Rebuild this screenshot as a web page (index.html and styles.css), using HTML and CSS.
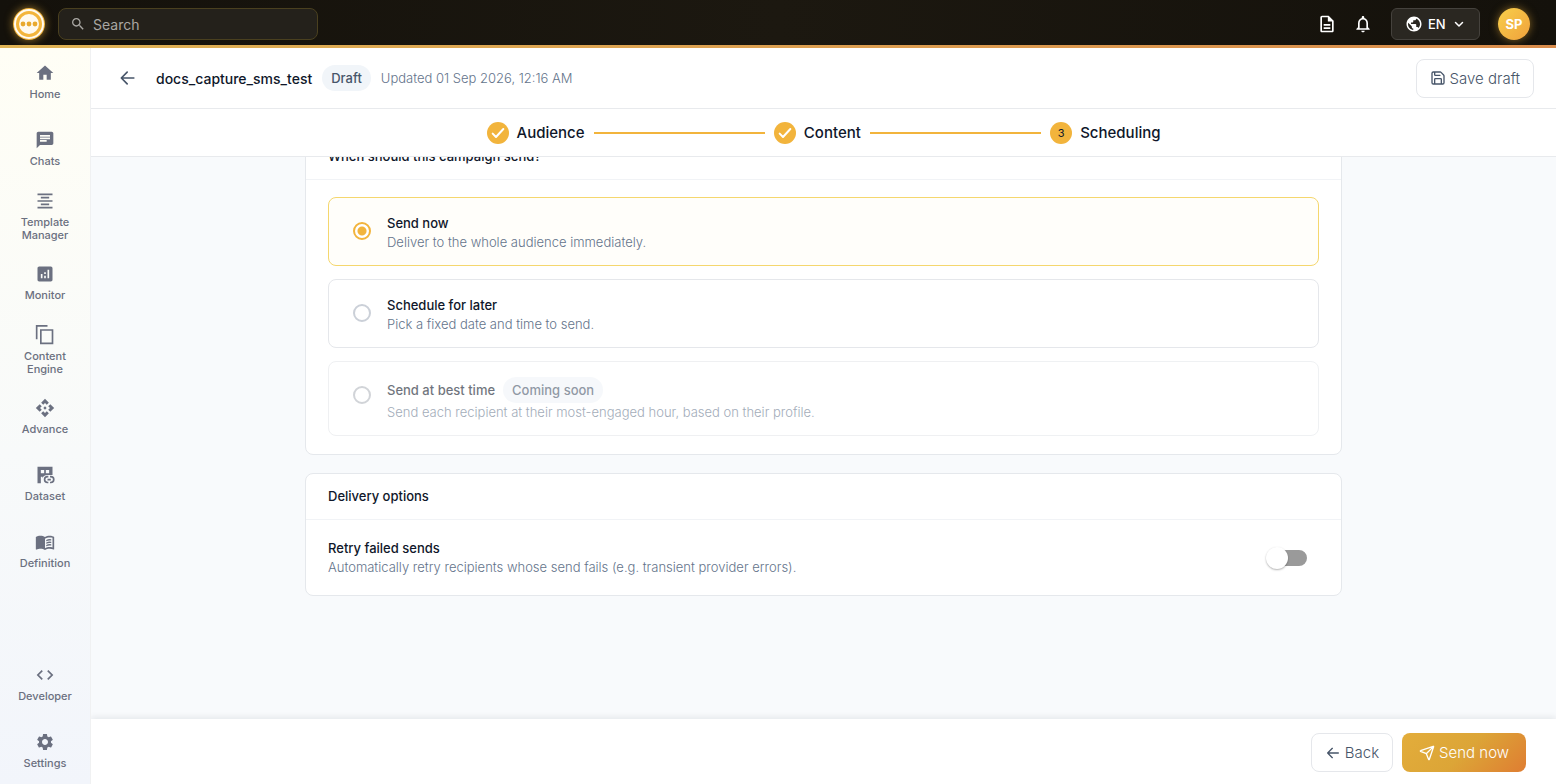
FILE: index.html
```html
<!DOCTYPE html>
<html lang="en">
<head>
  <meta charset="UTF-8" />
  <meta name="viewport" content="width=device-width, initial-scale=1" />
  <title>docs_capture_sms_test</title>
  <link rel="stylesheet" href="styles.css">
</head>
<body>

  <header class="topbar">
    <a class="logo" href="#" aria-label="Dashboard">
      <svg viewBox="0 0 32 32" width="32" height="32">
        <circle cx="16" cy="16" r="16" fill="#f3b53c" />
        <circle cx="16" cy="16" r="14" fill="none" stroke="#fffaf0" stroke-width="2" />
        <circle cx="16" cy="16" r="10" fill="#fffaf0" />
        <circle cx="10" cy="16" r="2.4" fill="#e9a92e" />
        <circle cx="16" cy="16" r="2.4" fill="#e9a92e" />
        <circle cx="22" cy="16" r="2.4" fill="#e9a92e" />
      </svg>
    </a>
    <label class="search">
      <svg class="icon" viewBox="0 0 24 24" width="16" height="16"><path d="M15.5 14h-.79l-.28-.27C15.41 12.59 16 11.11 16 9.5 16 5.91 13.09 3 9.5 3S3 5.91 3 9.5 5.91 16 9.5 16c1.61 0 3.09-.59 4.23-1.57l.27.28v.79l5 4.99L20.49 19zm-6 0C7.01 14 5 11.99 5 9.5S7.01 5 9.5 5 14 7.01 14 9.5 11.99 14 9.5 14" /></svg>
      <input type="search" placeholder="Search" aria-label="Search" />
    </label>
    <div class="topbar-actions">
      <button class="icon-button" type="button" aria-label="Documents">
        <svg class="icon" viewBox="0 0 24 24" width="20" height="20"><path d="M8 16h8v2H8zm0-4h8v2H8zm6-10H6c-1.1 0-2 .9-2 2v16c0 1.1.89 2 1.99 2H18c1.1 0 2-.9 2-2V8zm4 18H6V4h7v5h5z" /></svg>
      </button>
      <button class="icon-button" type="button" aria-label="Notifications">
        <svg class="icon" viewBox="0 0 24 24" width="20" height="20"><path d="M12 22c1.1 0 2-.9 2-2h-4c0 1.1.89 2 2 2zm6-6v-5c0-3.07-1.63-5.64-4.5-6.32V4c0-.83-.67-1.5-1.5-1.5s-1.5.67-1.5 1.5v.68C7.64 5.36 6 7.92 6 11v5l-2 2v1h16v-1zm-2 1H8v-6c0-2.48 1.51-4.5 4-4.5s4 2.02 4 4.5z" /></svg>
      </button>
      <label class="language">
        <svg class="icon" viewBox="0 0 24 24" width="18" height="18"><path d="M12 2C6.48 2 2 6.48 2 12s4.48 10 10 10 10-4.48 10-10S17.52 2 12 2m-1 17.93c-3.95-.49-7-3.85-7-7.93 0-.62.08-1.21.21-1.79L9 15v1c0 1.1.9 2 2 2zm6.9-2.54c-.26-.81-1-1.39-1.9-1.39h-1v-3c0-.55-.45-1-1-1H8v-2h2c.55 0 1-.45 1-1V7h2c1.1 0 2-.9 2-2v-.41c2.93 1.19 5 4.06 5 7.41 0 2.08-.8 3.97-2.1 5.39" /></svg>
        <select aria-label="Language">
          <option>EN</option>
        </select>
        <svg class="line-icon bold" viewBox="0 0 24 24" width="12" height="12"><path d="m5 9 7 7 7-7" /></svg>
      </label>
      <button class="avatar" type="button">SP</button>
    </div>
  </header>

  <div class="layout">
    <nav class="sidebar">
      <a class="nav-item" href="#">
        <svg class="icon" viewBox="0 0 24 24" width="20" height="20"><path d="M10 20v-6h4v6h5v-8h3L12 3 2 12h3v8z" /></svg>
        <span>Home</span>
      </a>
      <a class="nav-item" href="#">
        <svg class="icon" viewBox="0 0 24 24" width="20" height="20"><path d="M20 2H4c-1.1 0-1.99.9-1.99 2L2 22l4-4h14c1.1 0 2-.9 2-2V4c0-1.1-.9-2-2-2M6 9h12v2H6zm8 5H6v-2h8zm4-6H6V6h12z" /></svg>
        <span>Chats</span>
      </a>
      <a class="nav-item" href="#">
        <svg class="icon" viewBox="0 0 24 24" width="20" height="20"><path d="M7 15v2h10v-2zm-4 6h18v-2H3zm0-8h18v-2H3zm4-6v2h10V7zM3 3v2h18V3z" /></svg>
        <span>Template Manager</span>
      </a>
      <a class="nav-item" href="#">
        <svg class="icon" viewBox="0 0 24 24" width="20" height="20"><path d="M19 3H5c-1.1 0-2 .9-2 2v14c0 1.1.9 2 2 2h14c1.1 0 2-.9 2-2V5c0-1.1-.9-2-2-2M9 17H7v-5h2zm4 0h-2v-3h2zm0-5h-2v-2h2zm4 5h-2V7h2z" /></svg>
        <span>Monitor</span>
      </a>
      <a class="nav-item" href="#">
        <svg class="icon" viewBox="0 0 24 24" width="20" height="20"><path d="M15 0H1v17h2V2h12zM22 5H6v18h16zm-2 16H8V7h12z" /></svg>
        <span>Content Engine</span>
      </a>
      <a class="nav-item" href="#">
        <svg class="icon" viewBox="0 0 24 24" width="20" height="20"><path d="m14 12-2 2-2-2 2-2zm-2-6 2.12 2.12 2.5-2.5L12 1 7.38 5.62l2.5 2.5zm-6 6 2.12-2.12-2.5-2.5L1 12l4.62 4.62 2.5-2.5zm12 0-2.12 2.12 2.5 2.5L23 12l-4.62-4.62-2.5 2.5zm-6 6-2.12-2.12-2.5 2.5L12 23l4.62-4.62-2.5-2.5z" /></svg>
        <span>Advance</span>
      </a>
      <a class="nav-item" href="#">
        <svg class="icon" viewBox="0 0 24 24" width="20" height="20">
          <path fill-rule="evenodd" d="M3 2h18v10h-6c-3.5 0-5.5 2-6 4v-2H7v8H3zm4 4v4h4V6zm6 0v4h4V6z" />
          <path d="M16 20h-1a2.5 2.5 0 0 1 0-5h1v-2h-1a4.5 4.5 0 0 0 0 9h1zm3-7h-1v2h1a2.5 2.5 0 0 1 0 5h-1v2h1a4.5 4.5 0 0 0 0-9m-4 3.5h4v2h-4z" />
        </svg>
        <span>Dataset</span>
      </a>
      <a class="nav-item" href="#">
        <svg class="icon" viewBox="0 0 24 24" width="20" height="20"><path d="M21 5c-1.11-.35-2.33-.5-3.5-.5-1.95 0-4.05.4-5.5 1.5-1.45-1.1-3.55-1.5-5.5-1.5S2.45 4.9 1 6v14.65c0 .25.25.5.5.5.1 0 .15-.05.25-.05C3.1 20.45 5.05 20 6.5 20c1.95 0 4.05.4 5.5 1.5 1.35-.85 3.8-1.5 5.5-1.5 1.65 0 3.35.3 4.75 1.05.1.05.15.05.25.05.25 0 .5-.25.5-.5V6c-.6-.45-1.25-.75-2-1m0 13.5c-1.1-.35-2.3-.5-3.5-.5-1.7 0-4.15.65-5.5 1.5V8c1.35-.85 3.8-1.5 5.5-1.5 1.2 0 2.4.15 3.5.5z" /><path d="M13.5 9.5q3-1.5 6-.8v1.6q-3-.7-6 .8zm0 3q3-1.5 6-.8v1.6q-3-.7-6 .8zm0 3q3-1.5 6-.8v1.6q-3-.7-6 .8z" /></svg>
        <span>Definition</span>
      </a>
      <a class="nav-item nav-item-bottom" href="#">
        <svg class="icon" viewBox="0 0 24 24" width="20" height="20"><path d="M9.4 16.6 4.8 12l4.6-4.6L8 6l-6 6 6 6zm5.2 0 4.6-4.6-4.6-4.6L16 6l6 6-6 6z" /></svg>
        <span>Developer</span>
      </a>
      <a class="nav-item" href="#">
        <svg class="icon" viewBox="0 0 24 24" width="20" height="20"><path d="M19.14 12.94c.04-.3.06-.61.06-.94 0-.32-.02-.64-.07-.94l2.03-1.58c.18-.14.23-.41.12-.61l-1.92-3.32c-.12-.22-.37-.29-.59-.22l-2.39.96c-.5-.38-1.03-.7-1.62-.94l-.36-2.54c-.04-.24-.24-.41-.48-.41h-3.84c-.24 0-.43.17-.47.41l-.36 2.54c-.59.24-1.13.57-1.62.94l-2.39-.96c-.22-.08-.47 0-.59.22L2.74 8.87c-.12.21-.08.47.12.61l2.03 1.58c-.05.3-.09.63-.09.94s.02.64.07.94l-2.03 1.58c-.18.14-.23.41-.12.61l1.92 3.32c.12.22.37.29.59.22l2.39-.96c.5.38 1.03.7 1.62.94l.36 2.54c.05.24.24.41.48.41h3.84c.24 0 .44-.17.47-.41l.36-2.54c.59-.24 1.13-.56 1.62-.94l2.39.96c.22.08.47 0 .59-.22l1.92-3.32c.12-.22.07-.47-.12-.61zM12 15.6c-1.98 0-3.6-1.62-3.6-3.6s1.62-3.6 3.6-3.6 3.6 1.62 3.6 3.6-1.62 3.6-3.6 3.6" /></svg>
        <span>Settings</span>
      </a>
    </nav>

    <main class="main">
      <div class="page-header">
        <button class="back-link" type="button" aria-label="Go back">
          <svg class="line-icon" viewBox="0 0 24 24" width="20" height="20"><path d="M19 12H5M11 5l-7 7 7 7" /></svg>
        </button>
        <h1>docs_capture_sms_test</h1>
        <span class="badge">Draft</span>
        <span class="updated">Updated 01 Sep 2026, 12:16 AM</span>
        <button class="button save-button" type="button">
          <svg class="line-icon" viewBox="0 0 24 24" width="16" height="16"><path d="M15.2 3a2 2 0 0 1 1.4.6l3.8 3.8a2 2 0 0 1 .6 1.4V19a2 2 0 0 1-2 2H5a2 2 0 0 1-2-2V5a2 2 0 0 1 2-2zM17 21v-7a1 1 0 0 0-1-1H8a1 1 0 0 0-1 1v7M7 3v4a1 1 0 0 0 1 1h7" /></svg>
          Save draft
        </button>
      </div>

      <div class="stepper-bar">
        <ol class="stepper">
          <li class="step">
            <span class="step-dot"><svg class="line-icon bold" viewBox="0 0 24 24" width="16" height="16"><path d="m4 13 5 5L20 6" /></svg></span>
            Audience
          </li>
          <li class="step-line" role="presentation"></li>
          <li class="step">
            <span class="step-dot"><svg class="line-icon bold" viewBox="0 0 24 24" width="16" height="16"><path d="m4 13 5 5L20 6" /></svg></span>
            Content
          </li>
          <li class="step-line" role="presentation"></li>
          <li class="step" aria-current="step">
            <span class="step-dot">3</span>
            Scheduling
          </li>
        </ol>
      </div>

      <div class="content">
        <section class="card first-card">
          <h2>When should this campaign send?</h2>
          <div class="card-body options">
            <label class="option selected">
              <input type="radio" name="schedule" checked />
              <span class="text">
                <span class="title">Send now</span>
                <span class="description">Deliver to the whole audience immediately.</span>
              </span>
            </label>
            <label class="option">
              <input type="radio" name="schedule" />
              <span class="text">
                <span class="title">Schedule for later</span>
                <span class="description">Pick a fixed date and time to send.</span>
              </span>
            </label>
            <label class="option disabled">
              <input type="radio" name="schedule" disabled />
              <span class="text">
                <span class="title">Send at best time <span class="badge">Coming soon</span></span>
                <span class="description">Send each recipient at their most-engaged hour, based on their profile.</span>
              </span>
            </label>
          </div>
        </section>

        <section class="card">
          <h2>Delivery options</h2>
          <label class="card-body retry">
            <span class="text">
              <span class="title">Retry failed sends</span>
              <span class="description">Automatically retry recipients whose send fails (e.g. transient provider errors).</span>
            </span>
            <input class="switch" type="checkbox" role="switch" />
          </label>
        </section>
      </div>

      <footer class="footer">
        <button class="button" type="button">
          <svg class="line-icon" viewBox="0 0 24 24" width="16" height="16"><path d="M20 12H4M11 5l-7 7 7 7" /></svg>
          Back
        </button>
        <button class="button primary" type="button">
          <svg class="line-icon" viewBox="0 0 24 24" width="16" height="16"><path d="M14.5 21.7a.5.5 0 0 0 .9 0l6.5-19a.5.5 0 0 0-.6-.6l-19 6.5a.5.5 0 0 0 0 .9l7.9 3.2a2 2 0 0 1 1.1 1.1zM21.9 2.1l-11 11" /></svg>
          Send now
        </button>
      </footer>
    </main>
  </div>

</body>
</html>
```

FILE: styles.css
```css
* {
  box-sizing: border-box;
  margin: 0;
  padding: 0;
}

body {
  height: 100vh;
  display: flex;
  flex-direction: column;
  overflow: hidden;
  font-family: Inter, "Open Sans", sans-serif;
  font-size: 13px;
  color: #0f172a;
  background: #f8fafc;
}

button, input, select {
  font: inherit;
  color: inherit;
}

button {
  border: none;
  background: none;
  cursor: pointer;
}

a {
  color: inherit;
  text-decoration: none;
}

svg {
  display: block;
  flex: none;
}

.icon {
  fill: currentColor;
}

.line-icon {
  fill: none;
  stroke: currentColor;
  stroke-width: 2;
  stroke-linecap: round;
  stroke-linejoin: round;
}

.line-icon.bold {
  stroke-width: 3;
}

/* Top bar */
.topbar {
  flex: none;
  display: flex;
  align-items: center;
  height: 48px;
  padding: 3px 26px 0 13px;
  border-bottom: 3px solid;
  border-image: linear-gradient(90deg, #dfb355, #d98c4c) 1;
  background: linear-gradient(90deg, #14110b, #1c1810 50%, #14110b);
  color: #fff;
}

.logo {
  border-radius: 50%;
  box-shadow: 0 0 8px rgba(243, 181, 60, 0.6);
}

.search {
  display: flex;
  align-items: center;
  gap: 7px;
  width: 260px;
  height: 32px;
  margin-left: 13px;
  padding: 0 11px;
  border: 1px solid #4a401f;
  border-radius: 8px;
  background: #24211b;
  color: #a9a7a3;
}

.search input {
  flex: 1;
  min-width: 0;
  border: none;
  outline: none;
  background: none;
  font-size: 14px;
}

.search input::placeholder {
  color: #a9a7a3;
}

.topbar-actions {
  display: flex;
  align-items: center;
  gap: 16px;
  margin-left: auto;
}

.language {
  display: flex;
  align-items: center;
  gap: 5px;
  height: 32px;
  margin: 0 2px;
  padding: 0 14px 0 13px;
  border: 1px solid #45423d;
  border-radius: 6px;
  background: #2a2721;
  font-weight: 500;
}

.language select {
  width: 20px;
  appearance: none;
  border: none;
  outline: none;
  background: none;
}

.language option {
  color: #0f172a;
}

.avatar {
  width: 32px;
  height: 32px;
  border-radius: 50%;
  background: linear-gradient(135deg, #f8cf4a, #f0a13c);
  box-shadow: 0 0 8px rgba(243, 181, 60, 0.5);
  font-weight: 700;
}

/* Sidebar */
.layout {
  flex: 1;
  min-height: 0;
  display: flex;
}

.sidebar {
  flex: none;
  display: flex;
  flex-direction: column;
  width: 91px;
  border-right: 1px solid #f0f1f2;
  background: linear-gradient(180deg, #fffef5, #f8fafa 55%, #f2f5fb);
}

.nav-item {
  flex: none;
  display: flex;
  flex-direction: column;
  align-items: center;
  justify-content: center;
  gap: 5px;
  height: 67px;
  padding: 1px 14px 0;
  color: #6b7080;
  font-size: 11px;
  font-weight: 500;
  line-height: 13px;
  text-align: center;
}

.nav-item-bottom {
  margin-top: auto;
}

/* Page header */
.main {
  flex: 1;
  min-width: 0;
  display: flex;
  flex-direction: column;
  overflow: hidden;
}

.page-header {
  flex: none;
  display: flex;
  align-items: center;
  gap: 10px;
  height: 61px;
  padding: 0 22px 0 27px;
  border-bottom: 1px solid #e8eaed;
  background: #fff;
}

.page-header h1 {
  margin-left: 8px;
  font-size: 14px;
  font-weight: 500;
}

.back-link {
  color: #475569;
}

.badge {
  padding: 0 9px;
  border-radius: 13px;
  background: #f1f5f9;
  color: #475569;
  font-size: 13px;
  font-weight: 500;
  line-height: 26px;
}

.updated {
  color: #64748b;
  font-weight: 300;
}

.button {
  display: flex;
  align-items: center;
  gap: 4px;
  height: 39px;
  padding: 0 13px;
  border: 1px solid #e5e7eb;
  border-radius: 8px;
  background: #fff;
  color: #475569;
  font-size: 15px;
  font-weight: 300;
}

.save-button {
  margin-left: auto;
}

/* Stepper */
.stepper-bar {
  flex: none;
  padding: 13px 22px 12px;
  border-bottom: 1px solid #e8eaed;
  background: #fff;
}

.stepper {
  display: flex;
  align-items: center;
  gap: 9px;
  max-width: 674px;
  margin: 0 auto;
  list-style: none;
}

.step {
  display: flex;
  align-items: center;
  gap: 8px;
  font-size: 15px;
  font-weight: 500;
  line-height: 22px;
}

.step-dot {
  display: flex;
  align-items: center;
  justify-content: center;
  width: 22px;
  height: 22px;
  border-radius: 50%;
  background: #f2b43c;
  font-size: 11px;
  font-weight: 400;
}

.step-dot svg {
  color: #fff;
}

.step-line {
  flex: 1;
  height: 2px;
  background: #f2b43c;
}

/* Cards */
.content {
  flex: 1;
  min-height: 0;
  overflow: hidden;
  padding: 0 22px;
}

.card {
  max-width: 1037px;
  margin: 0 auto 18px;
  border: 1px solid #e5e8ec;
  border-radius: 8px;
  background: #fff;
}

.first-card {
  margin-top: -24px;
}

.card h2 {
  padding: 0 22px;
  border-bottom: 1px solid #f1f3f6;
  font-size: 13px;
  font-weight: 500;
  line-height: 45px;
}

.card-body {
  padding: 17px 22px 18px;
}

.options {
  display: flex;
  flex-direction: column;
  gap: 13px;
}

.option {
  display: flex;
  align-items: flex-start;
  gap: 16px;
  padding: 15px 24px 13px;
  border: 1px solid #e5e7eb;
  border-radius: 8px;
}

.option.selected {
  border-color: #f5d76e;
  background: #fffefa;
}

.option.disabled {
  opacity: 0.6;
}

.option input {
  appearance: none;
  flex: none;
  width: 18px;
  height: 18px;
  margin-top: 9px;
  border: 2px solid #cbd0d8;
  border-radius: 50%;
}

.option.disabled input {
  border-color: #b4b8bf;
}

.option input:checked {
  border-color: #f2b43c;
  background: radial-gradient(circle, #f2b43c 4px, #fff 5px);
}

.text {
  display: flex;
  flex-direction: column;
}

.title {
  display: flex;
  align-items: center;
  gap: 8px;
  font-weight: 500;
  line-height: 20px;
}

.description {
  color: #64748b;
  font-weight: 300;
  line-height: 19px;
}

.retry {
  display: flex;
  align-items: center;
  justify-content: space-between;
  padding-top: 18px;
}

.switch {
  appearance: none;
  display: flex;
  align-items: center;
  width: 38px;
  height: 16px;
  margin-right: 12px;
  border-radius: 8px;
  background: #9a9a9a;
}

.switch::before {
  content: "";
  flex: none;
  width: 22px;
  height: 22px;
  margin-left: -3px;
  border-radius: 50%;
  background: #fff;
  box-shadow: 0 1px 2px rgba(0, 0, 0, 0.3);
}

/* Footer */
.footer {
  flex: none;
  display: flex;
  justify-content: flex-end;
  gap: 9px;
  padding: 14px 30px 12px;
  background: #fff;
  box-shadow: 0 -2px 6px rgba(15, 23, 42, 0.08);
}

.button.primary {
  padding: 0 17px;
  border: none;
  background: linear-gradient(135deg, #e3ad3b 0%, #dca537 50%, #df7d32 100%);
  color: #fff;
}
```
